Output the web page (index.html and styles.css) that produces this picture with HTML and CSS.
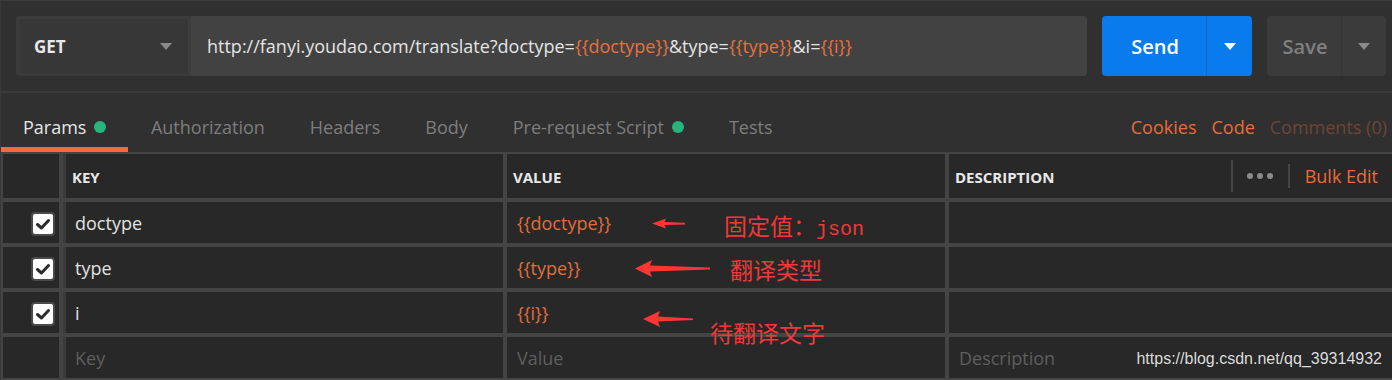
FILE: index.html
```html
<!DOCTYPE html>
<html>
<head>
<meta charset="utf-8">
<link rel="stylesheet" href="styles.css">
</head>
<body>
<div class="app">
  <div class="topbar">
    <div class="request">
      <div class="method"><span class="method-label">GET</span><i class="caret caret-grey"></i></div>
      <div class="url">http://fanyi.youdao.com/translate?doctype=<span class="var">{{doctype}}</span>&amp;type=<span class="var">{{type}}</span>&amp;i=<span class="var">{{i}}</span></div>
    </div>
    <div class="send">
      <span class="send-label">Send</span>
      <span class="send-drop"><i class="caret caret-white"></i></span>
    </div>
    <div class="save">
      <span class="save-label">Save</span>
      <span class="save-drop"><i class="caret caret-grey"></i></span>
    </div>
  </div>

  <div class="tabs">
    <div class="tab active">Params<span class="dot"></span></div>
    <div class="tab">Authorization</div>
    <div class="tab">Headers</div>
    <div class="tab">Body</div>
    <div class="tab">Pre-request Script<span class="dot"></span></div>
    <div class="tab">Tests</div>
    <div class="tab-links">
      <span class="link">Cookies</span>
      <span class="link">Code</span>
      <span class="link dim">Comments (0)</span>
    </div>
  </div>

  <div class="table">
    <div class="cell check-cell"></div>
    <div class="cell key-cell head">KEY</div>
    <div class="cell head">VALUE</div>
    <div class="cell head desc-head">
      <span>DESCRIPTION</span>
      <div class="bulk-tools">
        <span class="vsep tall"></span>
        <span class="dots"><i></i><i></i><i></i></span>
        <span class="vsep"></span>
        <span class="link">Bulk Edit</span>
      </div>
    </div>

    <div class="cell check-cell"><span class="checkbox"><svg width="20" height="20" viewBox="0 0 20 20"><polyline points="4.5,10.5 8.5,14 15.5,6.5" fill="none" stroke="#2b2b2b" stroke-width="3" stroke-linecap="round" stroke-linejoin="round"/></svg></span></div>
    <div class="cell key-cell row-text">doctype</div>
    <div class="cell row-text var">{{doctype}}</div>
    <div class="cell"></div>

    <div class="cell check-cell"><span class="checkbox"><svg width="20" height="20" viewBox="0 0 20 20"><polyline points="4.5,10.5 8.5,14 15.5,6.5" fill="none" stroke="#2b2b2b" stroke-width="3" stroke-linecap="round" stroke-linejoin="round"/></svg></span></div>
    <div class="cell key-cell row-text">type</div>
    <div class="cell row-text var">{{type}}</div>
    <div class="cell"></div>

    <div class="cell check-cell"><span class="checkbox"><svg width="20" height="20" viewBox="0 0 20 20"><polyline points="4.5,10.5 8.5,14 15.5,6.5" fill="none" stroke="#2b2b2b" stroke-width="3" stroke-linecap="round" stroke-linejoin="round"/></svg></span></div>
    <div class="cell key-cell row-text">i</div>
    <div class="cell row-text var">{{i}}</div>
    <div class="cell"></div>

    <div class="cell check-cell"></div>
    <div class="cell key-cell row-text placeholder">Key</div>
    <div class="cell row-text placeholder">Value</div>
    <div class="cell row-text placeholder">Description</div>
  </div>
</div>

<svg class="arrow arrow-1" width="34" height="11" viewBox="0 0 34 11"><polygon points="0,5.5 14,0.5 12.5,4 33,4.8 33,6.4 12.5,7 14,10.5" fill="#ff3535"/></svg>
<svg class="arrow arrow-2" width="76" height="17" viewBox="0 0 76 17"><polygon points="0,8.5 17,0 15,5.5 75,7.5 75,9.5 15,11.5 17,17" fill="#ff3535"/></svg>
<svg class="arrow arrow-3" width="51" height="16" viewBox="0 0 51 16"><polygon points="0,8 17,0 15,5.5 50,7.5 50,9 15,10.5 17,16" fill="#ff3535"/></svg>

<div class="note note-1">固定值：<span class="mono">json</span></div>
<div class="note note-2">翻译类型</div>
<div class="note note-3">待翻译文字</div>

<div class="watermark">https://blog.csdn.net/qq_39314932</div>
</body>
</html>
```

FILE: styles.css
```css
* { box-sizing: border-box; }

body {
  margin: 0;
  width: 1392px;
  height: 380px;
  overflow: hidden;
  position: relative;
  background: #303030;
  font-family: "Open Sans", "Noto Sans", sans-serif;
}

.app {
  height: 380px;
  border-top: 1px solid #3e3e3e;
  border-left: 1px solid #3a3a3a;
}

/* ---------- top bar ---------- */
.topbar {
  display: flex;
  gap: 15px;
  padding: 15px 6px 15px 15px;
  border-bottom: 2px solid #3a3a3a;
}

.request {
  width: 1071px;
  height: 60px;
  display: flex;
  background: #3b3b3b;
  border-radius: 4px;
  overflow: hidden;
}

.method {
  width: 172px;
  margin: 3px 0 3px 3px;
  padding: 0 16px 0 15px;
  background: #373737;
  border-right: 3px solid #3d3d3d;
  border-radius: 3px 0 0 3px;
  display: flex;
  align-items: center;
  justify-content: space-between;
}

.method-label {
  color: #e8e8e8;
  font-weight: 700;
  font-size: 17px;
}

.caret {
  display: block;
  width: 0;
  height: 0;
  border-left: 6px solid transparent;
  border-right: 6px solid transparent;
  border-top: 7px solid #8a8a8a;
}
.caret-white { border-top-color: #ffffff; }
.caret-grey { border-top-color: #8a8a8a; }

.url {
  flex: 1;
  background: #424242;
  display: flex;
  align-items: center;
  padding-left: 16px;
  color: #e4e4e4;
  font-size: 18px;
  white-space: nowrap;
}

.var { color: #e8703a; }

.send {
  width: 150px;
  height: 60px;
  background: #097bed;
  border-radius: 4px;
  display: flex;
}

.send-label {
  width: 104px;
  display: flex;
  align-items: center;
  justify-content: center;
  color: #ffffff;
  font-weight: 600;
  font-size: 20px;
  padding-left: 2px;
}

.send-drop {
  flex: 1;
  border-left: 1px solid #0a6cd0;
  display: flex;
  align-items: center;
  justify-content: center;
}

.save {
  width: 119px;
  height: 60px;
  background: #3b3b3b;
  border-radius: 4px;
  display: flex;
}

.save-label {
  width: 74px;
  display: flex;
  align-items: center;
  justify-content: center;
  color: #808080;
  font-weight: 600;
  font-size: 20px;
  padding-left: 2px;
}

.save-drop {
  flex: 1;
  border-left: 1px solid #363636;
  display: flex;
  align-items: center;
  justify-content: center;
}

/* ---------- tabs ---------- */
.tabs {
  height: 59px;
  display: flex;
}

.tab {
  display: flex;
  align-items: center;
  padding: 13px 22.5px 0 22.5px;
  border-bottom: 5px solid transparent;
  color: #7d7d7d;
  font-size: 18px;
  white-space: nowrap;
}

.tab.active {
  padding: 13px 22px 0 22px;
  color: #e6e6e6;
  border-bottom-color: #f26b3a;
}

.dot {
  width: 12px;
  height: 12px;
  border-radius: 50%;
  background: #26b47f;
  margin-left: 8px;
  margin-top: 1px;
}

.tab-links {
  margin-left: auto;
  display: flex;
  align-items: center;
  gap: 15px;
  padding: 13px 5px 5px 0;
  font-size: 18px;
}

.link { color: #ec6a3a; white-space: nowrap; }
.link.dim { color: #6e4536; }

/* ---------- table ---------- */
.table {
  display: grid;
  grid-template-columns: 56px 440px 438px 1fr;
  grid-template-rows: 44px 41px 41px 41px 41px;
  column-gap: 4px;
  row-gap: 4px;
  padding: 2px 0 2px 2px;
  background: #444444;
}

.cell {
  background: #282828;
  display: flex;
  align-items: center;
  padding-left: 10px;
  min-width: 0;
}

.key-cell {
  border-left: 3px solid #3a3a3a;
}

.head {
  padding-left: 6px;
  color: #e8e8e8;
  font-weight: 700;
  font-size: 15px;
  padding-top: 2px;
}

.desc-head { padding-right: 14px; }

.bulk-tools {
  margin-left: auto;
  display: flex;
  align-items: center;
  gap: 15px;
  font-weight: 400;
  font-size: 18px;
  margin-top: -2px;
}

.vsep {
  width: 2px;
  height: 24px;
  background: #454545;
}
.vsep.tall { height: 32px; }

.dots {
  display: flex;
  gap: 4px;
  margin-left: -1px;
}
.dots i {
  width: 6px;
  height: 6px;
  border-radius: 50%;
  background: #8a8a8a;
}

.check-cell {
  justify-content: flex-end;
  padding: 2px 4px 0 0;
}

.checkbox {
  width: 24px;
  height: 24px;
  background: #ffffff;
  border: 2px solid #4a4a4a;
  border-radius: 4px;
  display: flex;
  align-items: center;
  justify-content: center;
}

.row-text {
  font-size: 18px;
  color: #e2e2e2;
  white-space: nowrap;
}
.key-cell.row-text { padding-left: 9px; }
.row-text.var { color: #e36d38; }
.placeholder { color: #5e5e5e; }

/* ---------- annotations (overlay) ---------- */
.arrow { position: absolute; }
.arrow-1 { left: 652px; top: 218px; }
.arrow-2 { left: 635px; top: 260px; }
.arrow-3 { left: 643px; top: 311px; }

.note {
  position: absolute;
  color: #f03838;
  font-family: "Noto Sans CJK SC", sans-serif;
  font-size: 23px;
  line-height: 26px;
  white-space: nowrap;
}
.note .mono {
  font-family: "Liberation Mono", monospace;
  font-size: 20px;
}
.note-1 { left: 724px; top: 212px; }
.note-2 { left: 730px; top: 256px; }
.note-3 { left: 710px; top: 319px; }

.watermark {
  position: absolute;
  right: 10px;
  top: 350px;
  font-family: "Liberation Sans", Arial, sans-serif;
  font-size: 16px;
  color: #dedede;
  text-shadow: 0 0 1px rgba(0,0,0,0.4);
}
```
